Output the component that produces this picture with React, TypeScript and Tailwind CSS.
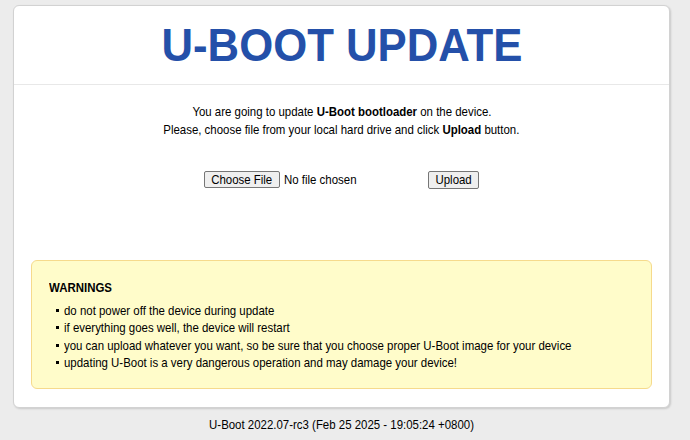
const warnings = [
  "do not power off the device during update",
  "if everything goes well, the device will restart",
  "you can upload whatever you want, so be sure that you choose proper U-Boot image for your device",
  "updating U-Boot is a very dangerous operation and may damage your device!",
];

// the screenshot text is a little narrower than Arial, so squeeze it
const squeeze = "inline-block whitespace-nowrap scale-x-[0.88]";

export default function App() {
  return (
    <div className="min-h-[440px] overflow-hidden bg-[#ececec] pt-[5px] font-['Liberation_Sans',Arial,sans-serif] text-[13px] text-black">
      {/* Card */}
      <div className="ml-[13px] w-[657px] rounded-[6px] border border-[#d2d2d2] bg-white shadow-[1px_1px_2px_rgba(0,0,0,0.15)]">
        {/* Header */}
        <div className="flex h-[79px] items-center justify-center border-b border-[#e8e8e8]">
          <h1 className="inline-block scale-x-[0.95] font-['Liberation_Sans',Arial,sans-serif] text-[46px] font-bold leading-none text-[#2450a9]">
            U-BOOT UPDATE
          </h1>
        </div>

        {/* Body */}
        <div className="px-[17px] pt-[18px] pb-[18px]">
          <div className="text-center leading-[17.5px]">
            <p>
              <span className={squeeze}>
                You are going to update <b>U-Boot bootloader</b> on the device.
              </span>
            </p>
            <p>
              <span className={squeeze}>
                Please, choose file from your local hard drive and click <b>Upload</b> button.
              </span>
            </p>
          </div>

          {/* Form */}
          <div className="mt-[32px] flex items-center justify-center">
            <div className="flex w-[224px] items-center">
              <span className="flex h-[17px] w-[76px] items-center justify-center rounded-[2px] border border-[#767676] bg-[#efefef]">
                <span className={squeeze}>Choose File</span>
              </span>
              <span className="ml-[4px] w-[80px]">
                <span className={`${squeeze} origin-left`}>No file chosen</span>
              </span>
            </div>
            <span className="flex h-[18px] w-[51px] items-center justify-center rounded-[2px] border border-[#767676] bg-[#efefef]">
              <span className={squeeze}>Upload</span>
            </span>
          </div>

          {/* Warnings */}
          <div className="mt-[70px] rounded-[6px] border border-[#f6da8c] bg-[#fffcca] px-[17px] pt-[18px] pb-[16px]">
            <h2 className="mb-[5px] font-bold leading-[18px]">
              <span className={`${squeeze} origin-left`}>WARNINGS</span>
            </h2>
            <ul className="leading-[17.5px]">
              {warnings.map((w) => (
                <li key={w} className="flex items-center">
                  <span className="ml-[7px] mr-[5px] h-[3px] w-[3px] shrink-0 bg-black" />
                  <span className={`${squeeze} origin-left`}>{w}</span>
                </li>
              ))}
            </ul>
          </div>
        </div>
      </div>

      {/* Footer */}
      <p className="ml-[13px] mt-[8px] w-[657px] text-center leading-[18px]">
        <span className={squeeze}>U-Boot 2022.07-rc3 (Feb 25 2025 - 19:05:24 +0800)</span>
      </p>
    </div>
  );
}
